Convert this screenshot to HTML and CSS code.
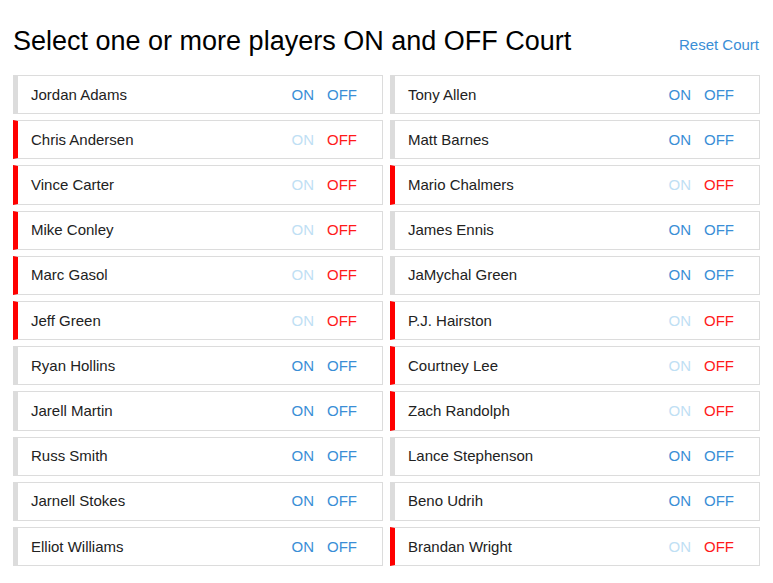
FILE: index.html
```html
<!DOCTYPE html>
<html>
<head>
<meta charset="utf-8">
<link rel="stylesheet" href="styles.css">
</head>
<body>
<div class="page">
  <div class="header">
    <h1 class="title">Select one or more players ON and OFF Court</h1>
    <a class="reset" href="#">Reset Court</a>
  </div>
  <div class="grid">
    <div class="player"><span class="name">Jordan Adams</span><span class="toggles"><span class="on">ON</span><span class="off">OFF</span></span></div>
    <div class="player"><span class="name">Tony Allen</span><span class="toggles"><span class="on">ON</span><span class="off">OFF</span></span></div>
    <div class="player is-off"><span class="name">Chris Andersen</span><span class="toggles"><span class="on">ON</span><span class="off">OFF</span></span></div>
    <div class="player"><span class="name">Matt Barnes</span><span class="toggles"><span class="on">ON</span><span class="off">OFF</span></span></div>
    <div class="player is-off"><span class="name">Vince Carter</span><span class="toggles"><span class="on">ON</span><span class="off">OFF</span></span></div>
    <div class="player is-off"><span class="name">Mario Chalmers</span><span class="toggles"><span class="on">ON</span><span class="off">OFF</span></span></div>
    <div class="player is-off"><span class="name">Mike Conley</span><span class="toggles"><span class="on">ON</span><span class="off">OFF</span></span></div>
    <div class="player"><span class="name">James Ennis</span><span class="toggles"><span class="on">ON</span><span class="off">OFF</span></span></div>
    <div class="player is-off"><span class="name">Marc Gasol</span><span class="toggles"><span class="on">ON</span><span class="off">OFF</span></span></div>
    <div class="player"><span class="name">JaMychal Green</span><span class="toggles"><span class="on">ON</span><span class="off">OFF</span></span></div>
    <div class="player is-off"><span class="name">Jeff Green</span><span class="toggles"><span class="on">ON</span><span class="off">OFF</span></span></div>
    <div class="player is-off"><span class="name">P.J. Hairston</span><span class="toggles"><span class="on">ON</span><span class="off">OFF</span></span></div>
    <div class="player"><span class="name">Ryan Hollins</span><span class="toggles"><span class="on">ON</span><span class="off">OFF</span></span></div>
    <div class="player is-off"><span class="name">Courtney Lee</span><span class="toggles"><span class="on">ON</span><span class="off">OFF</span></span></div>
    <div class="player"><span class="name">Jarell Martin</span><span class="toggles"><span class="on">ON</span><span class="off">OFF</span></span></div>
    <div class="player is-off"><span class="name">Zach Randolph</span><span class="toggles"><span class="on">ON</span><span class="off">OFF</span></span></div>
    <div class="player"><span class="name">Russ Smith</span><span class="toggles"><span class="on">ON</span><span class="off">OFF</span></span></div>
    <div class="player"><span class="name">Lance Stephenson</span><span class="toggles"><span class="on">ON</span><span class="off">OFF</span></span></div>
    <div class="player"><span class="name">Jarnell Stokes</span><span class="toggles"><span class="on">ON</span><span class="off">OFF</span></span></div>
    <div class="player"><span class="name">Beno Udrih</span><span class="toggles"><span class="on">ON</span><span class="off">OFF</span></span></div>
    <div class="player"><span class="name">Elliot Williams</span><span class="toggles"><span class="on">ON</span><span class="off">OFF</span></span></div>
    <div class="player is-off"><span class="name">Brandan Wright</span><span class="toggles"><span class="on">ON</span><span class="off">OFF</span></span></div>
  </div>
</div>
</body>
</html>
```
FILE: styles.css
```css
html, body {
  margin: 0;
  padding: 0;
  background: #fff;
}
body {
  font-family: "Liberation Sans", Arial, sans-serif;
  color: #222;
}
.page {
  padding: 0 13px;
}
.header {
  display: flex;
  justify-content: space-between;
  align-items: baseline;
  padding-top: 26px;
  margin-bottom: 19px;
}
.title {
  margin: 0;
  font-size: 27px;
  line-height: 30px;
  font-weight: normal;
  color: #000;
}
.reset {
  font-size: 15px;
  color: #3a8ed6;
  text-decoration: none;
  margin-right: 1px;
}
.grid {
  display: grid;
  grid-template-columns: 1fr 1fr;
  column-gap: 7px;
  row-gap: 6.02px;
}
.player {
  display: flex;
  justify-content: space-between;
  align-items: center;
  border: 1px solid #dcdcdc;
  border-left: 5px solid #dcdcdc;
  padding: 9.6px 25px 9.6px 13px;
  font-size: 15px;
  line-height: 18px;
}
.player.is-off {
  border-left-color: #ff0000;
}
.name {
  color: #222;
}
.toggles {
  display: flex;
  gap: 13px;
}
.on, .off {
  color: #3a8ed6;
}
.is-off .on {
  color: #bfe0f4;
}
.is-off .off {
  color: #ff1a1a;
}
```
